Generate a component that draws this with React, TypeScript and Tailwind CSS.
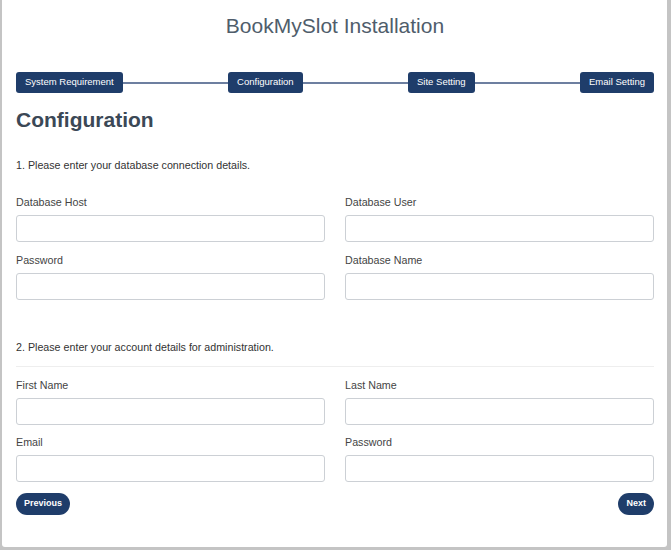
import React from 'react';

const steps = ['System Requirement', 'Configuration', 'Site Setting', 'Email Setting'];

const Field = ({ label }: { label: string }) => (
	<div className="flex flex-col">
		<label className="text-[10.7px] leading-[14px] text-[#444] mb-[6px]">{label}</label>
		<input className="h-[27px] w-full border border-[#ccd0d5] rounded-[3px] bg-white outline-none" />
	</div>
);

const App = () => {
	return (
		<div className="w-full h-[550px] bg-[#c4c4c4] pt-0" style={{ fontFamily: '"Liberation Sans", Arial, sans-serif' }}>
			<div className="ml-[2px] mr-[4px] h-[547px] bg-white rounded-b-[3px] pl-[14px] pr-[13px]">
				<h1 className="pt-[14px] text-center text-[21px] leading-[24px] text-[#4f5d6b]">BookMySlot Installation</h1>

				<div className="mt-[34px] flex flex-row items-center">
					{steps.map((s, i) => (
						<React.Fragment key={s}>
							{i > 0 && <div className="flex-1 h-[2px] bg-[#6d7fa0]" />}
							<div className="h-[21px] px-[9px] flex items-center rounded-[3px] bg-[#1f3d6a] text-white text-[9.5px] whitespace-nowrap">
								{s}
							</div>
						</React.Fragment>
					))}
				</div>

				<h2 className="mt-[15px] text-[21px] leading-[24px] font-bold text-[#3b4856]">Configuration</h2>

				<p className="mt-[26px] text-[10.7px] leading-[14px] text-[#333]">1. Please enter your database connection details.</p>

				<div className="mt-[23px] grid grid-cols-2 gap-x-[20px] gap-y-[11px]">
					<Field label="Database Host" />
					<Field label="Database User" />
					<Field label="Password" />
					<Field label="Database Name" />
				</div>

				<p className="mt-[40px] text-[10.7px] leading-[14px] text-[#333]">2. Please enter your account details for administration.</p>
				<div className="mt-[12px] h-px bg-[#eeeeee]" />

				<div className="mt-[11px] grid grid-cols-2 gap-x-[20px] gap-y-[10px]">
					<Field label="First Name" />
					<Field label="Last Name" />
					<Field label="Email" />
					<Field label="Password" />
				</div>

				<div className="mt-[11px] flex flex-row justify-between">
					<button className="h-[22px] px-[8px] rounded-full bg-[#1f3d6a] text-white text-[9px] font-bold">Previous</button>
					<button className="h-[22px] px-[8px] rounded-full bg-[#1f3d6a] text-white text-[9px] font-bold">Next</button>
				</div>
			</div>
		</div>
	);
};

export default App;
